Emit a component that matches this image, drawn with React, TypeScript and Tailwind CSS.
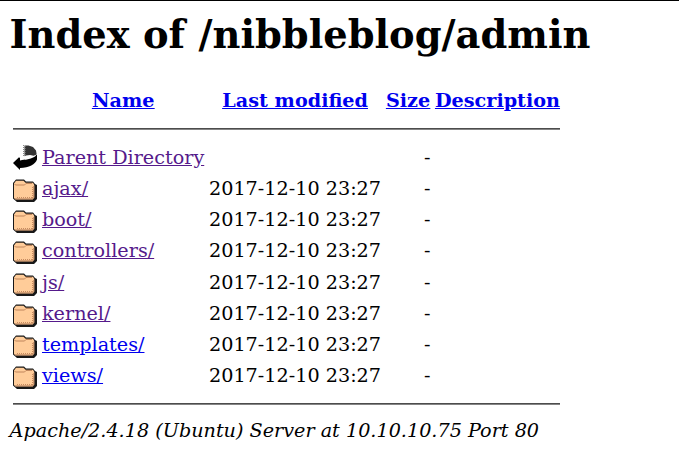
const rows = [
  ['ajax/', true], ['boot/', true], ['controllers/', true], ['js/', true],
  ['kernel/', true], ['templates/', false], ['views/', false],
] as const;

function Folder() {
  return (
    <svg width="25" height="24" viewBox="0 0 25 24" className="mt-[6px] block">
      <path d="M0 4 3 .5h8l2 2h7l2 2.5 2 1V20l-3 3H4l-4-3.5z" fill="#181818" />
      <path d="M1 4.5 3 1.7h7.5L12.5 3.8H20L21.3 6v12.5L19.8 20.5H2.5L1 19z" fill="#fc9" />
      <path d="M1.5 5 2.5 6h9L13 4.5h6" fill="none" stroke="#b97e55" strokeWidth="0.9" />
      <path d="M4 18.5h15M19.5 8v11" fill="none" stroke="#c68b60" strokeWidth="1" strokeDasharray="1 1" />
      <path d="M2 19.9h17.8l1-1.4V7" fill="none" stroke="#a97351" strokeWidth="0.8" />
    </svg>
  );
}

function Back() {
  return (
    <svg width="25" height="26" viewBox="0 0 25 26" className="mt-[3px] block">
      <path d="M11.5.5h4L20 2l3 3.5.7 4-3 1.2-3.7-.8-4 .5-1.5.8z" fill="#333" />
      <path d="M10.5 0v11" fill="none" stroke="#888" strokeWidth="1" strokeDasharray="1 1" />
      <path d="M12.5 1v9" fill="none" stroke="#666" strokeWidth="1" strokeDasharray="1 1" />
      <path d="M0 18 6 12.3 7 13v2.5c3-1 5-.3 8-1.2 4-1 7-2.2 8.3-4.3h.7v4.5c-1.5 4.8-8 8.1-17 8.5v2L5 23z" fill="#000" />
    </svg>
  );
}

export default function App() {
  return (
    <main className="h-[468px] w-[679px] overflow-hidden border-t border-black bg-white pl-[9.6px] font-['DejaVu_Serif',serif] text-[19.2px] leading-[31px] text-black">
      <h1 className="mt-[10px] text-[38.4px] font-bold leading-[48px] whitespace-nowrap">Index of /nibbleblog/admin</h1>
      <section className="ml-[3.4px] mt-[26px] w-[547px]">
        <div className="grid h-[43px] grid-cols-[29px_162.4px_181.6px_49px_125px] font-bold text-[#0000ee] underline whitespace-nowrap">
          <span /><a className="text-center">Name</a><a className="text-center">Last modified</a><a className="-ml-[4.8px] text-center">Size</a><a>Description</a>
        </div>
        <hr className="h-[2px] border-t border-b border-t-[#4c4c4c] border-b-[#858585]" />
        <div className="mt-[12px] grid h-[31px] grid-cols-[29px_167px_172px_49.4px] whitespace-nowrap">
          <Back /><a className="text-[#551a8b] underline">Parent Directory</a><span /><span className="text-right">-</span>
        </div>
        {rows.map(([name, visited]) => (
          <div key={name} className="grid h-[31.2px] grid-cols-[29px_167px_172px_49.4px] whitespace-nowrap">
            <Folder /><a className={visited ? 'text-[#551a8b] underline' : 'text-[#0000ee] underline'}>{name}</a><span>2017-12-10 23:27</span><span className="text-right">-</span>
          </div>
        ))}
        <hr className="mt-[12px] h-[2px] border-t border-b border-t-[#4c4c4c] border-b-[#858585]" />
      </section>
      <address className="mt-[10px] italic whitespace-nowrap">Apache/2.4.18 (Ubuntu) Server at 10.10.10.75 Port 80</address>
    </main>
  );
}
